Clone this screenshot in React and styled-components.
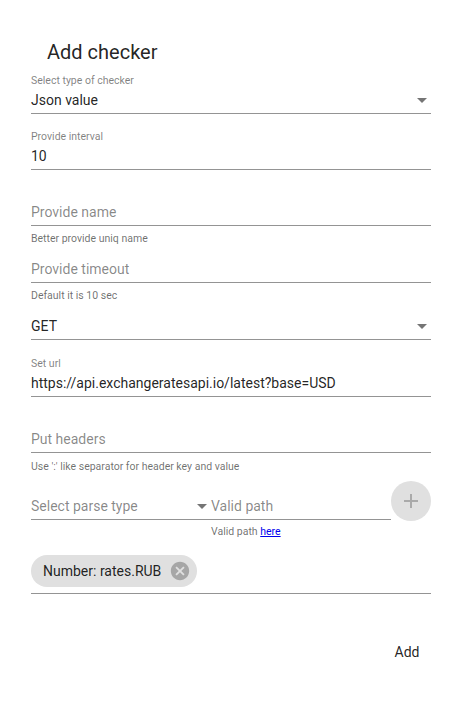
import React from "react";
import styled, { createGlobalStyle } from "styled-components";

const Global = createGlobalStyle`
  html, body { margin: 0; padding: 0; background: #fff; }
  body { font-family: Roboto, "Noto Sans", Arial, sans-serif; color: rgba(0,0,0,0.87); }
`;

const Page = styled.div`
  width: 400px;
  padding: 36px 22px 0 31px;
  display: flex;
  flex-direction: column;
`;

const Title = styled.h2`
  margin: 0 0 0 16px;
  font-size: 20px;
  line-height: 32px;
  font-weight: 400;
  color: rgba(0,0,0,0.87);
`;

const Field = styled.div`
  display: flex;
  flex-direction: column;
  margin-top: ${(p) => p.$mt}px;
`;

const Label = styled.label`
  font-size: 10.5px;
  line-height: 15px;
  color: rgba(0,0,0,0.5);
`;

const InputRow = styled.div`
  display: flex;
  align-items: center;
  padding: 3px 4px 4px 0;
  font-size: 14px;
  line-height: 18px;
  border-bottom: 1px solid rgba(0,0,0,0.42);
`;

const Value = styled.span`
  flex: 1;
  white-space: nowrap;
  color: ${(p) => (p.$placeholder ? "rgba(0,0,0,0.48)" : "rgba(0,0,0,0.87)")};
`;

const Arrow = styled.svg`
  width: 10px;
  height: 5px;
  flex: none;
  fill: rgba(0,0,0,0.54);
`;

const Helper = styled.p`
  margin: ${(p) => p.$mt}px 0 0;
  font-size: 10.5px;
  line-height: 14px;
  color: rgba(0,0,0,0.58);
`;

const HelperLink = styled.a`
  color: #0000ee;
  text-decoration: underline;
`;

const ParseRow = styled.div`
  display: flex;
  align-items: flex-start;
  margin-top: 7px;
`;

const ParseFields = styled.div`
  flex: 1;
  display: grid;
  grid-template-columns: 180px 1fr;
  margin-top: 13px;
`;

const Fab = styled.button`
  width: 40px;
  height: 40px;
  flex: none;
  border: 0;
  border-radius: 50%;
  background: #e0e0e0;
  display: flex;
  align-items: center;
  justify-content: center;
  padding: 0;
  svg { width: 24px; height: 24px; fill: rgba(0,0,0,0.24); }
`;

const ChipBox = styled.div`
  margin-top: 16px;
  padding-bottom: 6px;
  border-bottom: 1px solid rgba(0,0,0,0.42);
  display: flex;
`;

const Chip = styled.div`
  display: inline-flex;
  align-items: center;
  height: 32px;
  border-radius: 16px;
  background: #e0e0e0;
  font-size: 14px;
  color: rgba(0,0,0,0.87);
`;

const ChipLabel = styled.span`
  padding: 0 12px;
  white-space: nowrap;
`;

const ChipDelete = styled.svg`
  width: 22px;
  height: 22px;
  margin: 0 6px 0 -4px;
  fill: rgba(0,0,0,0.26);
`;

const Actions = styled.div`
  display: flex;
  justify-content: flex-end;
  margin: 40px -8px 0 0;
`;

const TextButton = styled.button`
  min-width: 64px;
  height: 36px;
  padding: 6px 8px;
  border: 0;
  background: transparent;
  font-family: Roboto, Arial, sans-serif;
  font-size: 14px;
  line-height: 24px;
  color: rgba(0,0,0,0.87);
`;

const DropArrow = () => (
  <Arrow viewBox="0 0 10 5">
    <path d="M0 0h10L5 5z" />
  </Arrow>
);

const TextField = ({ mt, label, value, placeholder, select, helper, helperMt = 6 }) => (
  <Field $mt={mt}>
    {label && <Label>{label}</Label>}
    <InputRow>
      <Value $placeholder={!value}>{value || placeholder}</Value>
      {select && <DropArrow />}
    </InputRow>
    {helper && <Helper $mt={helperMt}>{helper}</Helper>}
  </Field>
);

export default function App() {
  return (
    <>
      <Global />
      <Page>
        <Title>Add checker</Title>
        <TextField mt={5} label="Select type of checker" value="Json value" select />
        <TextField mt={15} label="Provide interval" value="10" />
        <TextField mt={30} placeholder="Provide name" helper="Better provide uniq name" />
        <TextField mt={11} placeholder="Provide timeout" helper="Default it is 10 sec" />
        <TextField mt={11} value="GET" select />
        <TextField mt={16} label="Set url" value="https://api.exchangeratesapi.io/latest?base=USD" />
        <TextField
          mt={30}
          placeholder="Put headers"
          helper="Use ':' like separator for header key and value"
          helperMt={7}
        />
        <ParseRow>
          <ParseFields>
            <InputRow>
              <Value $placeholder>Select parse type</Value>
              <DropArrow />
            </InputRow>
            <InputRow>
              <Value $placeholder>Valid path</Value>
            </InputRow>
            <span />
            <Helper $mt={5}>
              Valid path <HelperLink href="#">here</HelperLink>
            </Helper>
          </ParseFields>
          <Fab aria-label="add">
            <svg viewBox="0 0 24 24">
              <path d="M19 13h-6v6h-2v-6H5v-2h6V5h2v6h6v2z" />
            </svg>
          </Fab>
        </ParseRow>
        <ChipBox>
          <Chip>
            <ChipLabel>Number: rates.RUB</ChipLabel>
            <ChipDelete viewBox="0 0 24 24">
              <path d="M12 2C6.47 2 2 6.47 2 12s4.47 10 10 10 10-4.47 10-10S17.53 2 12 2zm5 13.59L15.59 17 12 13.41 8.41 17 7 15.59 10.59 12 7 8.41 8.41 7 12 10.59 15.59 7 17 8.41 13.41 12 17 15.59z" />
            </ChipDelete>
          </Chip>
        </ChipBox>
        <Actions>
          <TextButton>Add</TextButton>
        </Actions>
      </Page>
    </>
  );
}
